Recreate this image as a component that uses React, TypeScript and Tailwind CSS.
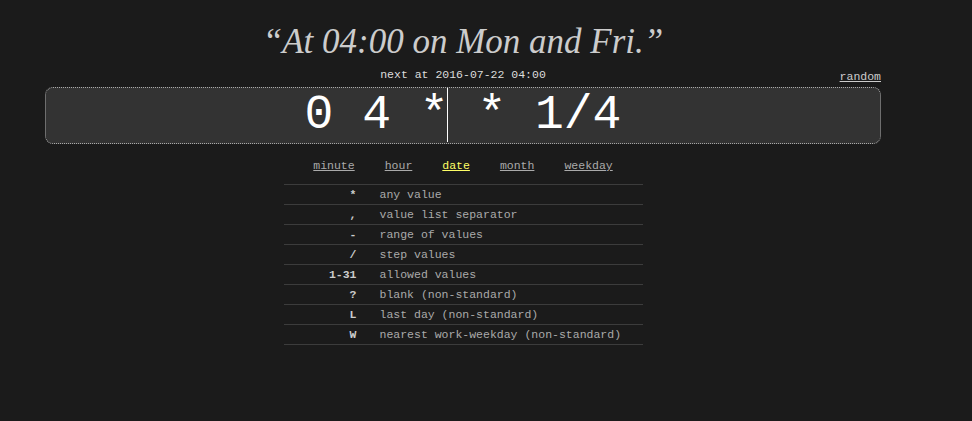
import React from "react";

const rows: [string, string][] = [
  ["*", "any value"],
  [",", "value list separator"],
  ["-", "range of values"],
  ["/", "step values"],
  ["1-31", "allowed values"],
  ["?", "blank (non-standard)"],
  ["L", "last day (non-standard)"],
  ["W", "nearest work-weekday (non-standard)"],
];

const links = ["minute", "hour", "date", "month", "weekday"];

export default function App() {
  return (
    <div className="w-[972px] h-[421px] bg-[#1b1b1b] overflow-hidden" style={{ fontFamily: '"Liberation Mono", monospace' }}>
      <div className="ml-[45px] w-[836px] flex flex-col items-center">
        <h1
          className="mt-[22px] h-[40px] text-[35px] leading-[40px] italic text-[#cccccc]"
          style={{ fontFamily: '"Liberation Serif", serif' }}
        >
          “At 04:00 on Mon and Fri.”
        </h1>
        <div className="w-full relative h-[16px] mt-[5px] text-[11.5px] leading-[16px] text-[#dddddd] text-center">
          next at 2016-07-22 04:00
          <a className="absolute right-0 top-[2px] underline text-[#cccccc]" href="#">random</a>
        </div>
        <div className="w-full h-[57px] mt-[4px] rounded-[8px] border border-dotted border-[#aaaaaa] bg-[#333333] flex items-center justify-center">
          <span
            className="relative text-[48px] leading-[55px] text-white whitespace-pre"
            style={{ fontFamily: '"Liberation Mono", monospace' }}
          >
            0 4 *<span className="inline-block w-[1px] h-[54px] bg-white align-middle -ml-[2px] mr-[1px]" /> * 1/4
          </span>
        </div>
        <div className="flex gap-[30px] mt-[14px] text-[11.5px] leading-[16px]">
          {links.map((l) => (
            <a key={l} href="#" className={"underline " + (l === "date" ? "text-[#ffff66]" : "text-[#aaaaaa]")}>
              {l}
            </a>
          ))}
        </div>
        <div className="w-[359px] mt-[10px] border-b border-[#3c3c3c] text-[11.5px]">
          {rows.map(([s, d]) => (
            <div key={s} className="flex h-[20px] items-center border-t border-[#3c3c3c]">
              <div className="w-[73px] text-right font-bold text-[#cccccc]">{s}</div>
              <div className="pl-[23px] text-[#aaaaaa]">{d}</div>
            </div>
          ))}
        </div>
      </div>
    </div>
  );
}
